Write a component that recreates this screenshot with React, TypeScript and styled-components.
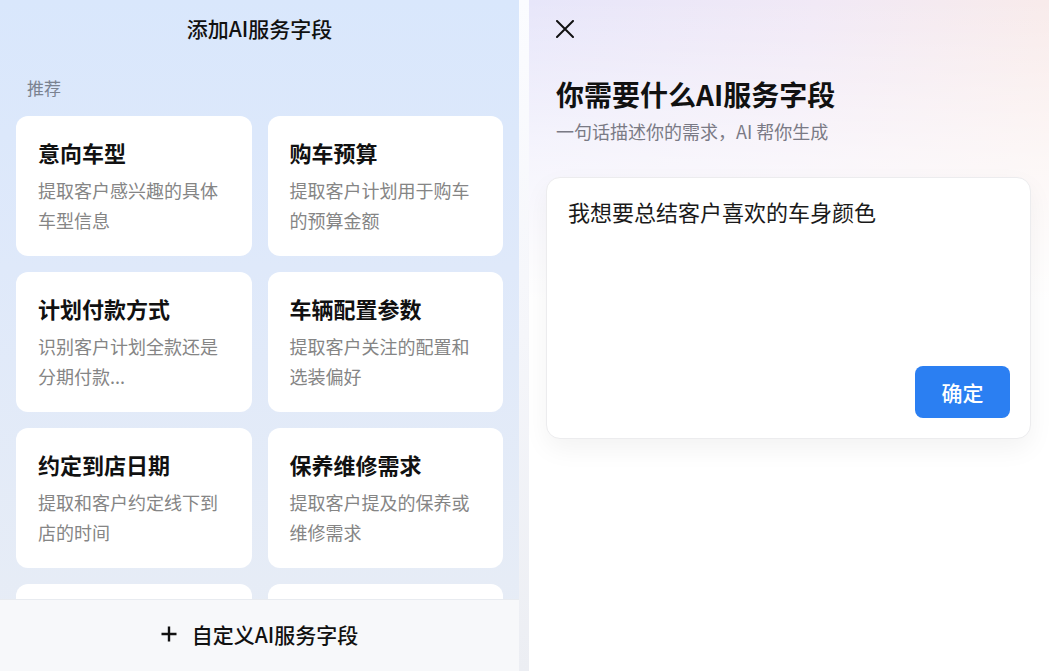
import styled, { createGlobalStyle } from "styled-components";

const GlobalStyle = createGlobalStyle`
  html, body {
    margin: 0;
    padding: 0;
    background: #ffffff;
  }
  body {
    font-family: "Noto Sans CJK SC", "Noto Sans", sans-serif;
    color: #111;
  }
  * {
    box-sizing: border-box;
  }
`;

const Page = styled.div`
  display: flex;
  width: 100vw;
  height: 100vh;
  overflow: hidden;
`;

const LeftPanel = styled.div`
  width: 519px;
  display: flex;
  flex-direction: column;
  background: linear-gradient(180deg, #d9e7fc 0%, #dfe9fa 40%, #e8edf5 100%);
`;

const Header = styled.div`
  height: 56px;
  display: flex;
  align-items: center;
  justify-content: center;
  font-size: 21px;
  font-weight: 500;
  color: #111;
`;

const SectionLabel = styled.div`
  margin: 20px 0 16px 27px;
  font-size: 17px;
  line-height: 24px;
  color: #7a8290;
`;

const ListArea = styled.div`
  flex: 1;
  overflow: hidden;
  padding: 0 16px;
`;

const CardGrid = styled.div`
  display: grid;
  grid-template-columns: 1fr 1fr;
  gap: 16px;
`;

const Card = styled.div`
  height: 140px;
  background: #ffffff;
  border-radius: 12px;
  padding: 21px 22px;
`;

const CardTitle = styled.div`
  font-size: 22px;
  line-height: 30px;
  font-weight: 600;
  color: #111;
`;

const CardDesc = styled.div`
  margin-top: 8px;
  font-size: 18px;
  line-height: 30px;
  color: #858585;
`;

const Footer = styled.div`
  height: 72px;
  flex-shrink: 0;
  display: flex;
  align-items: center;
  justify-content: center;
  gap: 15px;
  padding-bottom: 3px;
  background: #f7f8fa;
  border-top: 1px solid #e8ebf0;
  font-size: 21px;
  font-weight: 500;
  color: #111;
`;

const Divider = styled.div`
  width: 10px;
  background: linear-gradient(180deg, #fbfcff 0%, #f5f6fa 50%, #eceef3 100%);
`;

const RightPanel = styled.div`
  flex: 1;
  display: flex;
  flex-direction: column;
  padding: 0 18px 0 17px;
  background:
    linear-gradient(180deg, rgba(255, 255, 255, 0) 0%, rgba(255, 255, 255, 0.6) 160px, #ffffff 300px),
    linear-gradient(100deg, #e7e6fa 0%, #f1e9f6 45%, #fcece5 100%);
`;

const CloseButton = styled.button`
  margin: 20px 0 0 10px;
  width: 18px;
  height: 18px;
  padding: 0;
  border: 0;
  background: none;
  display: flex;
  cursor: pointer;
`;

const Intro = styled.div`
  padding-left: 10px;
  margin-top: 36px;
`;

const BigTitle = styled.div`
  font-size: 28px;
  line-height: 40px;
  font-weight: 700;
  color: #111;
`;

const SubTitle = styled.div`
  margin-top: 4px;
  font-size: 18px;
  line-height: 26px;
  color: #7a7a85;
`;

const InputCard = styled.div`
  margin-top: 33px;
  height: 262px;
  display: flex;
  flex-direction: column;
  justify-content: space-between;
  padding: 18px 20px 20px 21px;
  background: #ffffff;
  border: 1px solid #ececee;
  border-radius: 14px;
  box-shadow: 0 10px 26px rgba(0, 0, 0, 0.05);
`;

const Prompt = styled.div`
  font-size: 22px;
  line-height: 30px;
  color: #1a1a1a;
`;

const Actions = styled.div`
  display: flex;
  justify-content: flex-end;
`;

const ConfirmButton = styled.button`
  width: 95px;
  height: 52px;
  border: 0;
  border-radius: 8px;
  background: #2b7ff2;
  color: #ffffff;
  font-family: inherit;
  font-size: 21px;
  font-weight: 500;
  cursor: pointer;
`;

// the last row sits under the footer, only its top edge shows
const fields = [
  { title: "意向车型", desc: "提取客户感兴趣的具体车型信息" },
  { title: "购车预算", desc: "提取客户计划用于购车的预算金额" },
  { title: "计划付款方式", desc: "识别客户计划全款还是分期付款..." },
  { title: "车辆配置参数", desc: "提取客户关注的配置和选装偏好" },
  { title: "约定到店日期", desc: "提取和客户约定线下到店的时间" },
  { title: "保养维修需求", desc: "提取客户提及的保养或维修需求" },
  { title: "", desc: "" },
  { title: "", desc: "" },
];

function PlusIcon() {
  return (
    <svg width="16" height="16" viewBox="0 0 16 16">
      <path d="M8 0.5v15M0.5 8h15" stroke="#111" strokeWidth="2.4" />
    </svg>
  );
}

function CloseIcon() {
  return (
    <svg width="18" height="18" viewBox="0 0 18 18">
      <path d="M1 1l16 16M17 1L1 17" stroke="#111" strokeWidth="2" strokeLinecap="round" />
    </svg>
  );
}

function App() {
  return (
    <Page>
      <GlobalStyle />
      <LeftPanel>
        <Header>添加AI服务字段</Header>
        <SectionLabel>推荐</SectionLabel>
        <ListArea>
          <CardGrid>
            {fields.map((f, i) => (
              <Card key={i}>
                {f.title && <CardTitle>{f.title}</CardTitle>}
                {f.desc && <CardDesc>{f.desc}</CardDesc>}
              </Card>
            ))}
          </CardGrid>
        </ListArea>
        <Footer>
          <PlusIcon />
          <span>自定义AI服务字段</span>
        </Footer>
      </LeftPanel>
      <Divider />
      <RightPanel>
        <CloseButton aria-label="关闭">
          <CloseIcon />
        </CloseButton>
        <Intro>
          <BigTitle>你需要什么AI服务字段</BigTitle>
          <SubTitle>一句话描述你的需求，AI 帮你生成</SubTitle>
        </Intro>
        <InputCard>
          <Prompt>我想要总结客户喜欢的车身颜色</Prompt>
          <Actions>
            <ConfirmButton>确定</ConfirmButton>
          </Actions>
        </InputCard>
      </RightPanel>
    </Page>
  );
}

export default App;
